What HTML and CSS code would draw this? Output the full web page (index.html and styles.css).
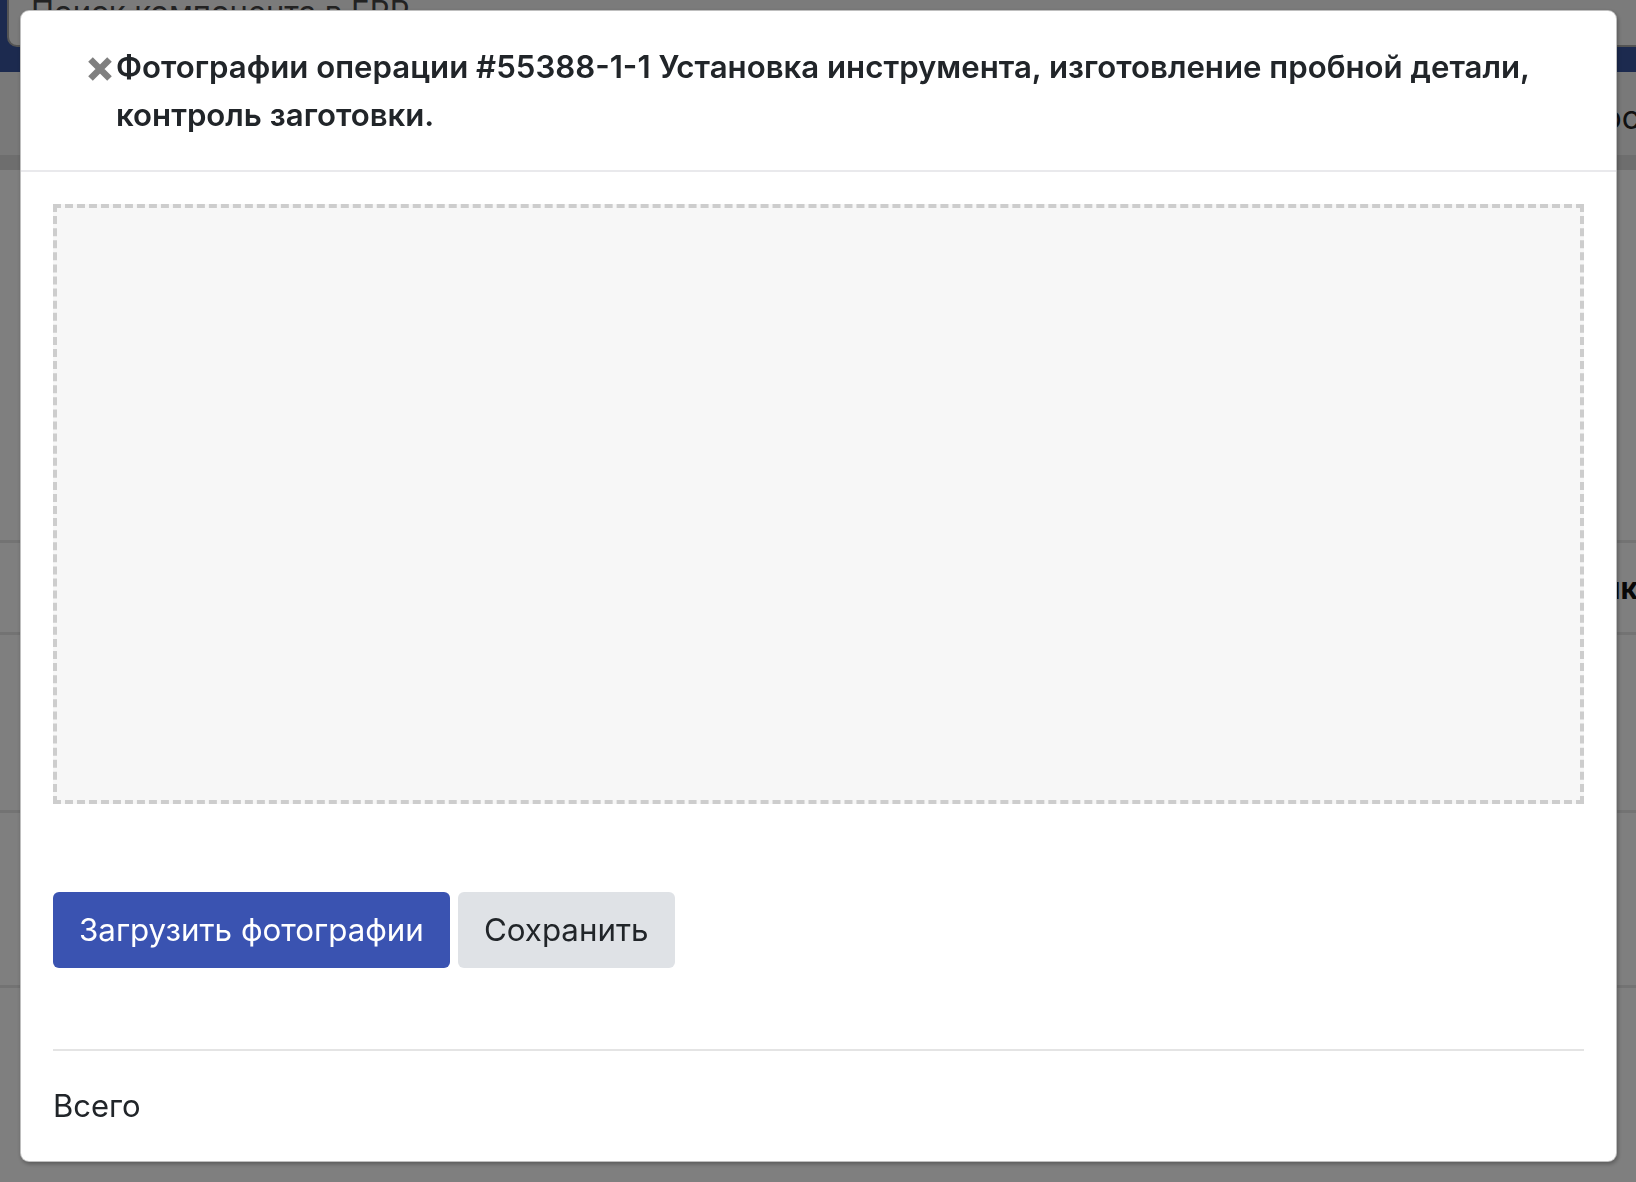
FILE: index.html
```html
<!DOCTYPE html>
<html lang="ru">
<head>
<meta charset="utf-8">
<title>Фотографии операции</title>
<link rel="stylesheet" href="styles.css">
</head>
<body>
<div class="page">
  <div class="topbar">
    <div class="search">Поиск компонента в ERP</div>
  </div>
  <div class="subbar"><span class="subbar-text">Прос</span></div>
  <div class="rows">
    <div class="row row-a"></div>
    <div class="row row-b"><span class="row-bold">Заказчик</span></div>
    <div class="row row-c"></div>
    <div class="row row-d"></div>
  </div>
</div>

<div class="overlay"></div>

<div class="modal">
  <div class="modal-header">
    <button class="close" type="button" aria-label="Закрыть">
      <svg width="26" height="26" viewBox="0 0 26 26"><path d="M3.5 3.5 L22.5 22.5 M22.5 3.5 L3.5 22.5" stroke="#7f7f7f" stroke-width="6.5" fill="none"/></svg>
    </button>
    <h5 class="modal-title">Фотографии операции #55388-1-1 Установка инструмента, изготовление пробной детали, контроль заготовки.</h5>
  </div>
  <div class="modal-body">
    <div class="dropzone"></div>
    <div class="actions">
      <button class="btn btn-primary" type="button">Загрузить фотографии</button>
      <button class="btn btn-light" type="button">Сохранить</button>
    </div>
    <div class="divider"></div>
    <div class="total">Всего</div>
  </div>
</div>
</body>
</html>
```

FILE: styles.css
```css
html, body {
  margin: 0;
  padding: 0;
}
body {
  background: #ffffff;
  font-family: Inter, "Noto Sans", "Liberation Sans", sans-serif;
  color: #212529;
  overflow: hidden;
  height: 1182px;
}

/* underlying page */
.page {
  width: 1636px;
}
.topbar {
  height: 72px;
  background: #38559f;
  display: flex;
  align-items: flex-start;
  overflow: hidden;
}
.search {
  margin-left: 7px;
  margin-top: -12px;
  height: 59px;
  flex: 1;
  margin-right: -20px;
  background: #f6f6f6;
  border: 2px solid #a9a9a9;
  border-radius: 10px;
  box-sizing: border-box;
  padding-left: 22px;
  font-size: 31px;
  line-height: 44px;
  color: #444;
}
.subbar {
  height: 98px;
  background: #f3f3f3;
  border-bottom: 15px solid #dcdcdc;
  box-sizing: border-box;
  display: flex;
  justify-content: flex-end;
  padding-top: 26px;
}
.subbar-text {
  font-size: 32px;
  line-height: 40px;
  margin-right: -4px;
  color: #222;
}
.rows {
  display: flex;
  flex-direction: column;
}
.row {
  border-bottom: 3px solid #e6e6e6;
  display: flex;
  justify-content: flex-end;
  align-items: center;
}
.row-a { height: 370px; }
.row-b { height: 89px; }
.row-c { height: 175px; }
.row-d { height: 172px; }
.row-bold {
  font-weight: 700;
  font-size: 30px;
  margin-right: -2px;
  color: #111;
}

.overlay {
  position: fixed;
  inset: 0;
  background: rgba(0, 0, 0, 0.5);
}

/* modal */
.modal {
  position: fixed;
  top: 10px;
  left: 20px;
  width: 1597px;
  height: 1152px;
  box-sizing: border-box;
  background: #ffffff;
  border: 1px solid rgba(0, 0, 0, 0.25);
  border-radius: 9px;
  box-shadow: 1px 2px 4px rgba(0, 0, 0, 0.3);
  display: flex;
  flex-direction: column;
}
.modal-header {
  display: flex;
  align-items: flex-start;
  gap: 3px;
  padding: 32px 32px 31px 66px;
  border-bottom: 2px solid #e9e9ec;
}
.close {
  flex: none;
  border: 0;
  background: none;
  padding: 0;
  margin-top: 13px;
  width: 26px;
  height: 26px;
  display: flex;
}
.modal-title {
  margin: 0;
  font-size: 31.2px;
  line-height: 48px;
  font-weight: 600;
  color: #212529;
}
.modal-body {
  padding: 32px 32px 0 32px;
  display: flex;
  flex-direction: column;
}
.dropzone {
  height: 600px;
  box-sizing: border-box;
  background: #f7f7f7;
  border: 4px dashed #cdcdcd;
}
.actions {
  display: flex;
  gap: 8px;
  margin-top: 88px;
}
.btn {
  font-family: inherit;
  font-size: 31.3px;
  line-height: 48px;
  padding: 14px 26px;
  border: 0;
  border-radius: 6px;
}
.btn-primary {
  background: #3a53b1;
  color: #ffffff;
}
.btn-light {
  background: #dfe2e6;
  color: #212529;
}
.divider {
  margin-top: 81px;
  height: 2px;
  background: #e4e4e4;
}
.total {
  margin-top: 31px;
  font-size: 31px;
  line-height: 48px;
  color: #212529;
}
```
